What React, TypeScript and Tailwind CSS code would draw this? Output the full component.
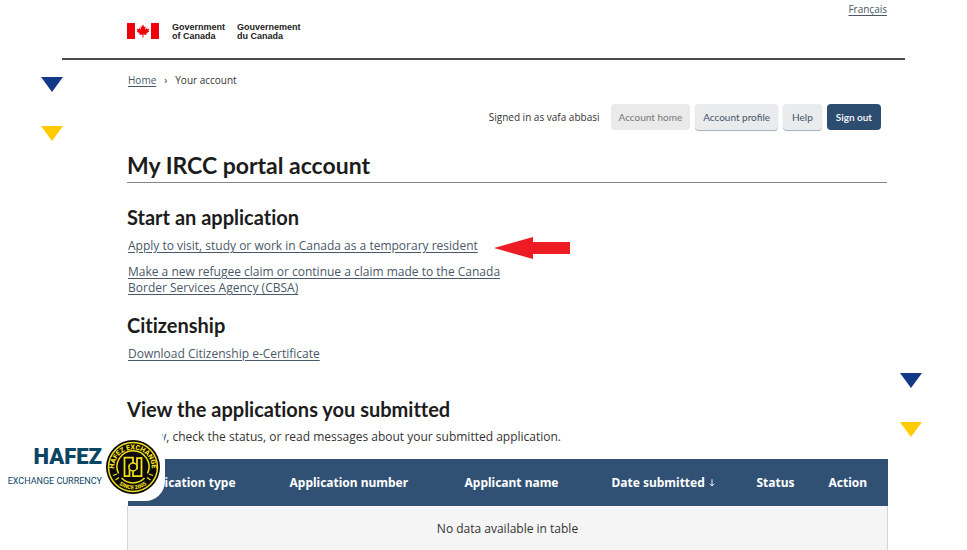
import type { ReactNode } from "react";

const columns = [
  { label: "Application type", width: "w-[152px]" },
  { label: "Application number", width: "w-[175px]" },
  { label: "Applicant name", width: "w-[147px]" },
  { label: "Date submitted", width: "w-[145px]", sorted: true },
  { label: "Status", width: "w-[72px]" },
  { label: "Action", width: "w-[69px]" },
];

function TextLink({ children }: { children: ReactNode }) {
  return (
    <a href="#" className="text-[#4a5867] underline underline-offset-2">
      {children}
    </a>
  );
}

function SectionTitle({ children }: { children: ReactNode }) {
  return (
    <h2 className="font-['Lato',sans-serif] text-xl leading-[26px] font-bold text-[#1c1c1c] [font-variant-ligatures:none]">
      {children}
    </h2>
  );
}

function CanadaFlag() {
  return (
    <svg viewBox="0 0 64 32" className="h-4 w-8" role="img" aria-label="Canada">
      <path fill="#f00008" d="M0 0h16v32H0zM48 0h16v32H48z" />
      <path
        fill="#f00008"
        d="M32 3l-2.6 4.8-2.8-1.3 1.5 7.2-3.6-3.7-.9 2-4-.7 1.400 4.200-1.700.9 6.400 5.200-.8 2.300 6.200-.9-.2 6.200h2.200l-.2-6.200 6.200.9-.8-2.300 6.400-5.200-1.700-.9 1.400-4.200-4 .7-.9-2-3.600 3.700 1.500-7.200-2.800 1.300z"
      />
    </svg>
  );
}

function Markers() {
  return (
    <svg viewBox="0 0 22 64" className="h-16 w-[22px]" aria-hidden="true">
      <path fill="#133a86" d="M0 0h22L11 15z" />
      <path fill="#ffcb05" d="M0 49h22L11 64z" />
    </svg>
  );
}

function HafezSeal() {
  return (
    <svg viewBox="0 0 108 108" className="h-14 w-[54px]" role="img" aria-label="Hafez Exchange seal">
      <defs>
        <path id="seal-top" d="M17.500 65a37.500 37.500 0 1 1 73 0" />
        <path id="seal-bottom" d="M9.500 54a44.500 44.500 0 0 0 89 0" />
      </defs>
      <circle cx="54" cy="54" r="54" fill="#0a0a08" />
      <circle cx="54" cy="54" r="49" fill="none" stroke="#f2df1c" strokeWidth="3" />
      <path
        d="M25 67A32 32 0 1 1 83 67M31 76A32 32 0 0 0 77 76"
        fill="none"
        stroke="#f2df1c"
        strokeWidth="3"
      />
      <g fill="#f2df1c" fontFamily="Roboto, sans-serif" fontWeight="900">
        <text fontSize="14" textAnchor="middle">
          <textPath href="#seal-top" startOffset="50%">HAFEZ EXCHANGE</textPath>
        </text>
        <text fontSize="11" textAnchor="middle">
          <textPath href="#seal-bottom" startOffset="50%">SINCE 2005</textPath>
        </text>
      </g>
      <path
        d="M37 74V35h17v12M37 72h10V49M71 34v38H54V62M71 36h-9v23"
        fill="none"
        stroke="#f2df1c"
        strokeWidth="3.500"
      />
      <circle cx="54" cy="54" r="8" fill="#0a0a08" stroke="#f2df1c" strokeWidth="3" />
      <path d="M14 71l8-3M94 71l-8-3M19 80l7-5M89 80l-7-5" stroke="#f2df1c" strokeWidth="2.500" />
    </svg>
  );
}

function BrandBadge() {
  return (
    <div className="absolute top-[425px] left-0 flex h-[76px] w-[165px] items-start gap-1 rounded-r-[20px] bg-white pt-[14px] text-[#0a4562]">
      <div className="flex w-[102px] flex-col items-end pt-1">
        <span className="font-['Roboto',sans-serif] text-[22px] leading-7 font-black">HAFEZ</span>
        <span className="font-['Roboto',sans-serif] text-[9px] leading-5 whitespace-nowrap">
          EXCHANGE CURRENCY
        </span>
      </div>
      <HafezSeal />
    </div>
  );
}

export default function App() {
  return (
    <div className="relative h-screen overflow-hidden bg-white font-['Open_Sans','Noto_Sans',sans-serif] text-xs text-[#333]">
      <header className="mr-[62px] ml-[62px] flex h-[60px] justify-between border-b-2 border-[#4b4a4f] pr-[18px] pl-[65px]">
        <div className="flex items-start gap-[13px] pt-[23px] font-['Liberation_Sans',sans-serif] text-[9px] leading-[9px] font-bold text-[#222]">
          <CanadaFlag />
          <span className="w-[52px]">Government of Canada</span>
          <span className="w-16">Gouvernement du Canada</span>
        </div>
        <div className="pt-px text-[10px] leading-4">
          <TextLink>Français</TextLink>
        </div>
      </header>

      <main className="pr-20 pl-[127px]">
        <nav aria-label="Breadcrumb" className="flex items-center gap-2 pt-3 pl-px text-[10px] leading-4">
          <TextLink>Home</TextLink>
          <span>›</span>
          <span>Your account</span>
        </nav>

        <div className="mt-4 flex items-center justify-end gap-[5px] pr-[6px] font-['Lato',sans-serif] text-[10px] leading-4 text-[#44546a]">
          <span className="mr-[6px] font-['Open_Sans','Noto_Sans',sans-serif] text-[#333]">
            Signed in as vafa abbasi
          </span>
          <button className="h-[26px] rounded-sm bg-[#eaeaea] px-2 text-[#777]">Account home</button>
          <button className="h-[26px] rounded-sm bg-[#eaebed] px-2 shadow-[0_1px_1px_#a5adb8]">
            Account profile
          </button>
          <button className="h-[26px] rounded-sm bg-[#eaebed] px-[9px] shadow-[0_1px_1px_#a5adb8]">
            Help
          </button>
          <button className="h-[26px] rounded-sm bg-[#2c4c70] px-[9px] font-semibold text-white">Sign out</button>
        </div>

        <h1 className="mt-[19px] border-b border-[#8a8487] pb-px font-['Lato',sans-serif] text-[23px] leading-8 font-bold text-[#1c1c1c] [font-variant-ligatures:none]">
          My IRCC portal account
        </h1>

        <section className="mt-[21px]">
          <SectionTitle>Start an application</SectionTitle>
          <div className="mt-[5px] flex items-center gap-4 pl-px leading-4">
            <TextLink>Apply to visit, study or work in Canada as a temporary resident</TextLink>
            <svg viewBox="0 0 76 22" className="mt-0.5 -mb-0.5 h-[22px] w-[76px]" aria-hidden="true">
              <path fill="#ed1c24" d="M0 11L39 0v5h37v12H39v5z" />
            </svg>
          </div>
          <p className="mt-[7px] w-96 pl-px leading-4">
            <TextLink>
              Make a new refugee claim or continue a claim made to the Canada Border Services Agency (CBSA)
            </TextLink>
          </p>
        </section>

        <section className="mt-4">
          <SectionTitle>Citizenship</SectionTitle>
          <p className="mt-2 pl-px leading-4">
            <TextLink>Download Citizenship e-Certificate</TextLink>
          </p>
        </section>

        <section className="mt-[34px]">
          <SectionTitle>View the applications you submitted</SectionTitle>
          <p className="mt-[7px] leading-4">
            Review, check the status, or read messages about your submitted application.
          </p>
          <table className="mt-[14px] w-full table-fixed border-collapse">
            <thead>
              <tr className="h-[47px] bg-[#315174] text-left font-['Noto_Sans',sans-serif] text-white">
                {columns.map((column) => (
                  <th key={column.label} className={`${column.width} pl-[10px] font-bold whitespace-nowrap`}>
                    {column.label}
                    {column.sorted && (
                      <svg viewBox="0 0 8 10" className="ml-1 inline h-2 w-[6px]" aria-label="sorted descending">
                        <path d="M4 0v9M1 6l3 3 3-3" fill="none" stroke="currentColor" strokeWidth="1.200" />
                      </svg>
                    )}
                  </th>
                ))}
              </tr>
            </thead>
            <tbody>
              <tr className="h-[46px] border-x border-[#d5d5d5] bg-[#f5f5f5]">
                <td colSpan={6} className="text-center">
                  No data available in table
                </td>
              </tr>
            </tbody>
          </table>
        </section>
      </main>

      <div className="absolute top-[77px] left-[41px]">
        <Markers />
      </div>
      <div className="absolute top-[373px] right-[45px]">
        <Markers />
      </div>
      <BrandBadge />
    </div>
  );
}
